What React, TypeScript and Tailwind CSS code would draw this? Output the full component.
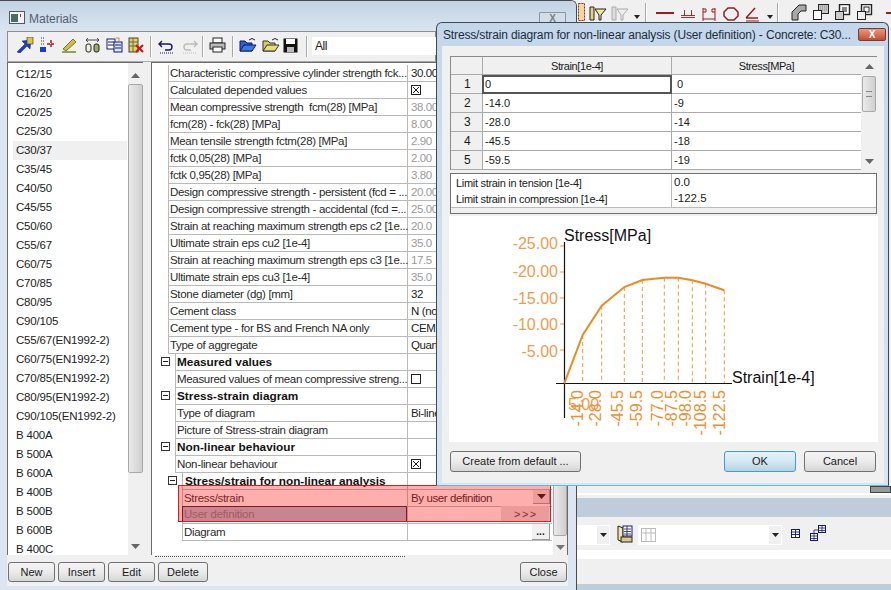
import React from "react";

const F = { fontFamily: '"Liberation Sans", Arial, sans-serif' };

const materials = ["C12/15","C16/20","C20/25","C25/30","C30/37","C35/45","C40/50","C45/55","C50/60","C55/67","C60/75","C70/85","C80/95","C90/105","C55/67(EN1992-2)","C60/75(EN1992-2)","C70/85(EN1992-2)","C80/95(EN1992-2)","C90/105(EN1992-2)","B 400A","B 500A","B 600A","B 400B","B 500B","B 600B","B 400C"];

type Row = { t: string; v?: string; g?: boolean; kind?: "h" | "h2" | "sub" | "sub2"; c?: "x" | "o" };
const rows: Row[] = [
  { t: "Characteristic compressive cylinder strength fck...", v: "30.00" },
  { t: "Calculated depended values", c: "x" },
  { t: "Mean compressive strength  fcm(28) [MPa]", v: "38.00", g: true },
  { t: "fcm(28) - fck(28) [MPa]", v: "8.00", g: true },
  { t: "Mean tensile strength fctm(28) [MPa]", v: "2.90", g: true },
  { t: "fctk 0,05(28) [MPa]", v: "2.00", g: true },
  { t: "fctk 0,95(28) [MPa]", v: "3.80", g: true },
  { t: "Design compressive strength - persistent (fcd = ...", v: "20.00", g: true },
  { t: "Design compressive strength - accidental (fcd =...", v: "25.00", g: true },
  { t: "Strain at reaching maximum strength eps c2 [1e...", v: "20.0", g: true },
  { t: "Ultimate strain eps cu2 [1e-4]", v: "35.0", g: true },
  { t: "Strain at reaching maximum strength eps c3 [1e...", v: "17.5", g: true },
  { t: "Ultimate strain eps cu3 [1e-4]", v: "35.0", g: true },
  { t: "Stone diameter (dg) [mm]", v: "32" },
  { t: "Cement class", v: "N (normal)" },
  { t: "Cement type - for BS and French NA only", v: "CEM I" },
  { t: "Type of aggregate", v: "Quartzite" },
  { t: "Measured values", kind: "h" },
  { t: "Measured values of mean compressive streng...", kind: "sub", c: "o" },
  { t: "Stress-strain diagram", kind: "h" },
  { t: "Type of diagram", kind: "sub", v: "Bi-linear" },
  { t: "Picture of Stress-strain diagram", kind: "sub" },
  { t: "Non-linear behaviour", kind: "h" },
  { t: "Non-linear behaviour", kind: "sub", c: "x" },
  { t: "Stress/strain for non-linear analysis", kind: "h2" },
  { t: "Stress/strain", kind: "sub2", v: "By user definition" },
  { t: "", kind: "sub2" },
  { t: "Diagram", kind: "sub2" },
];

const tableRows = [["1", "0", " 0"], ["2", "-14.0", "-9"], ["3", "-28.0", "-14"], ["4", "-45.5", "-18"], ["5", "-59.5", "-19"]];

const Btn = ({ x, y, w, h = 21, children, blue }: { x: number; y: number; w: number; h?: number; children: React.ReactNode; blue?: boolean }) => (
  <div
    className={`absolute flex items-center justify-center rounded-[3px] border text-[11px] text-[#1a1a1a] bg-gradient-to-b ${blue ? "border-[#3c9fc8] from-[#e4f3fa] via-[#d4e8f2] to-[#b6d2e0]" : "border-[#707070] from-[#f4f4f4] via-[#ebebeb] to-[#d6d6d6]"}`}
    style={{ left: x, top: y, width: w, height: h }}
  >
    {children}
  </div>
);

const Minus = ({ x, y }: { x: number; y: number }) => (
  <div className="absolute flex h-[9px] w-[9px] items-center justify-center border border-[#333] bg-white" style={{ left: x, top: y }}>
    <div className="h-px w-[5px] bg-[#222]" />
  </div>
);

const Arrow = ({ x, y, up, color = "#555" }: { x: number; y: number; up?: boolean; color?: string }) => (
  <svg className="absolute" style={{ left: x, top: y }} width="9" height="5">
    <path d={up ? "M0 5 L4.5 0 L9 5Z" : "M0 0 L9 0 L4.5 5Z"} fill={color} />
  </svg>
);

const Icon = ({ x, y = 38, w = 18, h = 16, children }: { x: number; y?: number; w?: number; h?: number; children: React.ReactNode }) => (
  <svg className="absolute" style={{ left: x, top: y }} width={w} height={h} viewBox={`0 0 ${w} ${h}`}>
    {children}
  </svg>
);

const Sep = ({ x, y = 35, h = 21 }: { x: number; y?: number; h?: number }) => (
  <div className="absolute w-[2px] border-l border-r border-l-[#a8a8a8] border-r-white" style={{ left: x, top: y, height: h }} />
);

const Check = ({ x, y, on }: { x: number; y: number; on: boolean }) => (
  <svg className="absolute" style={{ left: x, top: y }} width="10" height="10">
    <rect x=".5" y=".5" width="9" height="9" fill="#fff" stroke="#222" />
    {on && <path d="M2 2 L8 8 M8 2 L2 8" stroke="#222" strokeWidth="1" />}
  </svg>
);

const curve: [number, number][] = [[564.3,383.3],[582.7,335],[601.7,305.7],[624.3,287],[642.3,280],[664.3,277.7],[678.3,277.7],[692.3,280.3],[705.7,283.7],[724.3,290.3]];
const xLabels: [number, string][] = [[577,"-14.0"],[595,"-28.0"],[617.7,"-45.5"],[636.7,"-59.5"],[657,"-77.0"],[671.7,"-87.5"],[685.7,"-98.0"],[700,"-108.5"],[719.3,"-122.5"]];

export default function App() {
  return (
    <div className="relative h-[590px] w-[891px] overflow-hidden bg-[#f0f0f0] text-[12px] text-[#1a1a1a]" style={F}>
      {/* Right background app */}
      <div className="absolute left-[577px] top-[498px] h-[19px] w-[314px] bg-[#bfccd9]" />
      <div className="absolute left-[577px] top-[550px] h-[9px] w-[314px] bg-white" />
      <div className="absolute left-[577px] top-[584px] h-[6px] w-[314px] bg-[#bfccd9]" />
      <div className="absolute left-[577px] top-[493px] h-[2px] w-[314px] bg-white" />
      <div className="absolute left-[870px] top-[486px] h-[7px] w-[21px] border border-[#444] bg-[#999]" />
      <div className="absolute left-[577px] top-[525px] h-[20px] w-[33px] bg-white" />
      <div className="absolute left-[597px] top-[526px] h-[18px] w-[12px] bg-[#f0f0f0]" />
      <svg className="absolute left-[600px] top-[533px]" width="7" height="4"><path d="M0 0H7L3.500 4Z" fill="#222" /></svg>
      <Icon x={616} y={525} w={18} h={20}>
        <path d="M2 1 L7 3 L7 17 L2 15Z" fill="#f6e7a0" stroke="#222" />
        <rect x="7" y="1" width="9" height="10" fill="#fff" stroke="#1a1a7a" />
        <path d="M8 4h7M8 6.5h7M8 9h7M11 1v10" stroke="#1a1a7a" strokeWidth=".8" />
        <rect x="5" y="12" width="11" height="5" fill="#d9c98b" stroke="#222" />
      </Icon>
      <div className="absolute left-[638px] top-[525px] h-[20px] w-[144px] bg-white" />
      <div className="absolute left-[769px] top-[526px] h-[18px] w-[12px] bg-[#f0f0f0]" />
      <svg className="absolute left-[772px] top-[533px]" width="7" height="4"><path d="M0 0H7L3.500 4Z" fill="#222" /></svg>
      <Icon x={641} y={528} w={15} h={14}>
        <rect x=".5" y=".5" width="14" height="13" fill="#fff" stroke="#bbb" />
        <path d="M5 0v14M10 0v14M0 5h15" stroke="#bbb" />
      </Icon>
      <Icon x={791} y={529} w={10} h={10}>
        <rect x=".5" y=".5" width="8" height="8" fill="#fff" stroke="#15157a" />
        <path d="M1 3h7M1 5.500h7M4.500 1v7" stroke="#15157a" strokeWidth=".9" />
      </Icon>
      <Icon x={810} y={525} w={17} h={17}>
        <rect x="8.500" y=".5" width="7" height="7" fill="#fff" stroke="#15157a" />
        <rect x=".5" y="8.500" width="7" height="7" fill="#fff" stroke="#15157a" />
        <path d="M9 3h6M9 5.500h6M1 11h6M1 13.500h6M4 9v6M12 1v6M4 8V5h4" stroke="#15157a" strokeWidth=".8" fill="none" />
      </Icon>

      {/* Top right toolbar */}
      <Icon x={578} y={3} w={8} h={19}>
        <rect x=".5" y=".5" width="6" height="17" fill="#f0d8a0" stroke="#a02020" strokeDasharray="2 1" />
      </Icon>
      <Icon x={589} y={6} w={18} h={16}>
        <path d="M1 1 L5 1 L5 14 L1 14Z" fill="#e8d080" stroke="#222" />
        <path d="M6 3 L17 3 L12 9 L12 14 L10 14 L10 9Z" fill="#f0e6a0" stroke="#222" />
      </Icon>
      <Icon x={611} y={6} w={18} h={16}>
        <path d="M1 1 L5 1 L5 14 L1 14Z" fill="#ddd" stroke="#aaa" />
        <path d="M6 3 L17 3 L12 9 L12 14 L10 14 L10 9Z" fill="#eee" stroke="#aaa" />
      </Icon>
      <svg className="absolute left-[634px] top-[15px]" width="6" height="4"><path d="M0 0H6L3 4Z" fill="#222" /></svg>
      <Sep x={645} y={3} h={22} />
      <div className="absolute left-[656px] top-[12px] h-[2px] w-[18px] bg-[#9c1c1c]" />
      <Icon x={681} y={8} w={14} h={10}>
        <path d="M0 7.500h14M0 9.500h14M3.500 2v6M10.500 2v6" stroke="#9c1c1c" strokeWidth=".9" fill="none" />
      </Icon>
      <Icon x={702} y={7} w={14} h={15}>
        <path d="M1 1v13M13 1v13M1 12h12M1 2h3v3H1M13 2h-3v3h3" stroke="#9c1c1c" fill="none" />
      </Icon>
      <Icon x={723} y={7} w={16} h={14}>
        <path d="M5 1h6l4 4v4l-4 4H5L1 9V5Z" fill="none" stroke="#9c1c1c" strokeWidth="1.5" />
      </Icon>
      <Icon x={745} y={7} w={15} h={15}>
        <path d="M1 11 L10 1 M1 11 H13" stroke="#9c1c1c" strokeWidth="1.5" fill="none" />
        <path d="M1 14h13" stroke="#9c1c1c" />
      </Icon>
      <svg className="absolute left-[767px] top-[15px]" width="6" height="4"><path d="M0 0H6L3 4Z" fill="#222" /></svg>
      <Sep x={777} y={3} h={22} />
      <Icon x={791} y={4} w={16} h={17}>
        <path d="M1 16 V8 L8 1 H15 V7 H10 L7 10 V16Z" fill="#a8a8a8" stroke="#222" />
      </Icon>
      <Icon x={813} y={4} w={16} h={17}>
        <rect x="5.500" y=".5" width="10" height="9" fill="#c8c8c8" stroke="#222" />
        <path d="M7 2h7M7 4h7M7 6h7" stroke="#888" strokeDasharray="1 1" />
        <rect x=".5" y="6.500" width="8" height="9" fill="#fff" stroke="#222" />
      </Icon>
      <Icon x={835} y={4} w={16} h={17}>
        <rect x="4.500" y=".5" width="10" height="10" fill="#fff" stroke="#222" strokeWidth="1.4" />
        <rect x="7" y="3" width="5" height="5" fill="#888" />
        <rect x=".5" y="7.500" width="8" height="8" fill="#ccc" stroke="#222" />
      </Icon>
      <Icon x={857} y={4} w={16} h={17}>
        <rect x="4.500" y=".5" width="10" height="10" fill="#fff" stroke="#222" strokeWidth="1.4" />
        <rect x="7" y="3" width="5" height="5" fill="#fff" stroke="#222" />
        <rect x=".5" y="7.500" width="8" height="8" fill="#eee" stroke="#222" />
      </Icon>
      <div className="absolute left-[886px] top-[12px] h-[2px] w-[5px] bg-[#9c1c1c]" />

      {/* Materials window */}
      <div className="absolute left-[-1px] top-0 h-[590px] w-[578px] overflow-hidden rounded-tr-[6px] border-l border-r border-t border-[#4a4a4a] bg-[#dbe6f2]">
        <div className="absolute left-0 top-0 h-[30px] w-full bg-gradient-to-b from-[#c3d3e4] to-[#d9e5f1]" />
        <div className="absolute left-[7px] top-[61px] h-[524px] w-[561px] bg-[#f0f0f0]" />
        <svg className="absolute left-[9px] top-[10px]" width="16" height="13">
          <rect x=".5" y=".5" width="15" height="12" fill="#f4f4f4" stroke="#556" />
          <rect x="2" y="3" width="7" height="8" fill="#4b6a6a" />
          <rect x="11" y="3" width="1" height="3" fill="#b03030" />
        </svg>
        <div className="absolute left-[29px] top-[9px] text-[12px] text-[#55606c]">Materials</div>
        <div className="absolute left-[539px] top-[11px] flex h-[13px] w-[27px] items-center justify-center rounded-b-[2px] border border-[#8a97a5] bg-[#d2dde8] text-[10px] font-bold text-[#7a7f86]">X</div>

        {/* toolbar */}
        <div className="absolute left-[7px] top-[30px] h-[31px] w-[429px] border border-[#8e8e8e] border-b-[#aaa] bg-[#f0f0f0]" />
        <Icon x={16} y={36}>
          <path d="M1 15 L9 7 L6 4 L15 3 L14 12 L11 9 L4 16Z" fill="#1a3fd0" stroke="#0a1a70" strokeWidth=".5" />
          <rect x="11" y="0" width="6" height="7" fill="#e7c22c" stroke="#333" strokeWidth=".6" />
        </Icon>
        <Icon x={39} y={36}>
          <path d="M2 1h4M2 4h4M2 7h4" stroke="#333" strokeDasharray="1 1" />
          <rect x="1" y="10" width="6" height="5" fill="#1a3fd0" />
          <path d="M8 7h8M12 3v8" stroke="#b01818" strokeWidth="1.5" strokeDasharray="3 1" />
        </Icon>
        <Icon x={61} y={36}>
          <path d="M2 12 L12 2 L15 5 L5 14Z" fill="#d9be2c" stroke="#444" strokeWidth=".7" />
          <path d="M1 15h14" stroke="#6a8f1a" strokeWidth="1.5" />
        </Icon>
        <Icon x={84} y={36}>
          <path d="M2 3h13M2 3l2-2M2 3l2 2M15 3l-2-2M15 3l-2 2" stroke="#222" fill="none" strokeWidth=".8" />
          <rect x="2" y="7" width="5" height="8" rx="2" fill="#f0f0d8" stroke="#222" />
          <rect x="10" y="7" width="5" height="8" rx="2" fill="#98b060" stroke="#222" />
        </Icon>
        <Icon x={106} y={36}>
          <rect x="1" y="2" width="8" height="10" fill="#fff" stroke="#16167a" />
          <path d="M2 5h6M2 8h6" stroke="#16167a" />
          <rect x="8" y="5" width="8" height="10" fill="#d5e8f5" stroke="#16167a" />
          <path d="M9 8h6M9 11h6" stroke="#16167a" />
          <path d="M10 1 L13 1 L13 4" stroke="#c09020" fill="none" />
        </Icon>
        <Icon x={128} y={36}>
          <rect x="1" y="1" width="9" height="14" fill="#e5cf60" stroke="#444" />
          <path d="M1 5h9M1 9h9M5 1v14" stroke="#444" strokeWidth=".7" />
          <path d="M8 8 L15 15 M15 8 L8 15" stroke="#c81818" strokeWidth="2.200" />
        </Icon>
        <Sep x={150} />
        <Icon x={158} y={37}>
          <path d="M4 3 L1 6 L4 9 M1 6 H11 a3 3 0 0 1 0 6 H7" fill="none" stroke="#14147a" strokeWidth="1.400" />
          <path d="M2 15h13" stroke="#14147a" strokeDasharray="1 1" />
        </Icon>
        <Icon x={181} y={37}>
          <path d="M13 3 L16 6 L13 9 M16 6 H6 a3 3 0 0 0 0 6 H10" fill="none" stroke="#bbb" strokeWidth="1.400" />
          <path d="M2 15h13" stroke="#bbb" strokeDasharray="1 1" />
        </Icon>
        <Sep x={202} />
        <Icon x={209} y={36}>
          <rect x="4" y="1" width="9" height="5" fill="#fff" stroke="#222" />
          <rect x="1" y="6" width="15" height="6" fill="#bbb" stroke="#222" />
          <rect x="4" y="10" width="9" height="5" fill="#fff" stroke="#222" />
        </Icon>
        <Sep x={232} />
        <Icon x={239} y={36}>
          <path d="M1 14 V4 H6 L8 6 H13 V14Z" fill="#2a5fd8" stroke="#111a60" />
          <path d="M1 14 L5 8 H17 L13 14Z" fill="#3a7ae8" stroke="#111a60" />
          <path d="M10 3 Q13 0 16 3" stroke="#222" fill="none" />
        </Icon>
        <Icon x={262} y={36}>
          <path d="M1 14 V4 H6 L8 6 H13 V14Z" fill="#d6ca60" stroke="#333" />
          <path d="M1 14 L5 8 H17 L13 14Z" fill="#e6de78" stroke="#333" />
          <path d="M10 3 Q13 0 16 3" stroke="#222" fill="none" />
        </Icon>
        <Icon x={283} y={37} w={15} h={15}>
          <rect x=".5" y=".5" width="14" height="14" fill="#111" />
          <rect x="3" y="1" width="9" height="5" fill="#fff" />
          <rect x="4" y="9" width="7" height="5" fill="#bbb" />
        </Icon>
        <Sep x={306} />
        <div className="absolute left-[312px] top-[36px] h-[18px] w-[124px] bg-white pl-[3px] text-[12px] leading-[18px] tracking-[-0.5px]">All</div>

        {/* list */}
        <div className="absolute left-[7px] top-[61px] h-[493px] w-[136px] overflow-hidden border-l border-t border-[#6a6a6a] bg-white">
          {materials.map((m, i) => (
            <div key={m} className={`absolute left-[5px] flex h-[19px] w-[114px] items-center pl-[3px] text-[11.5px] tracking-[-0.2px] text-[#222] ${i === 4 ? "bg-[#f0f0f0]" : ""}`} style={{ top: 2 + i * 19 }}>
              {m}
            </div>
          ))}
          <div className="absolute left-[120px] top-0 h-full w-[16px] bg-[#f0f0f0]" />
          <div className="absolute left-[120px] top-[21px] h-[389px] w-[15px] rounded-[2px] border border-[#a8a8a8] bg-gradient-to-r from-[#eaeaea] to-[#cfcfcf]" />
          <Arrow x={123} y={10} up color="#666" />
          <Arrow x={123} y={481} color="#666" />
        </div>

        {/* grid */}
        <div className="absolute left-[151px] top-[61px] h-[493px] w-[417px] overflow-hidden border-l border-t border-r border-[#6a6a6a] bg-white">
          {rows.map((r, i) => {
            const top = 2 + i * 17;
            const left = r.kind === "h" || r.kind === "sub" ? 23 : r.kind === "h2" || r.kind === "sub2" ? 30 : 16;
            const bold = r.kind === "h" || r.kind === "h2";
            const textLeft = r.kind === "h2" ? 31 : left;
            return (
              <div key={i} className="absolute h-[17px] w-[400px]" style={{ top }}>
                <div className="absolute right-0 top-[16px] h-px bg-[#b9b9b9]" style={{ left }} />
                <div className="absolute left-[255px] top-0 h-[17px] w-px bg-[#b9b9b9]" />
                <div className="absolute top-0 h-[17px] w-px bg-[#b9b9b9]" style={{ left }} />
                <div
                  className={`absolute top-0 whitespace-pre leading-[17px] ${bold ? "text-[11.8px] font-bold text-[#111]" : "text-[11.5px] tracking-[-0.32px] text-[#2a2a2a]"}`}
                  style={{ left: textLeft + 2 }}
                >
                  {r.t}
                </div>
                {r.v && (
                  <div className={`absolute left-[259px] top-0 whitespace-pre text-[11.5px] leading-[17px] tracking-[-0.4px] ${r.g ? "text-[#9a9a9a]" : "text-[#222]"}`}>{r.v}</div>
                )}
                {r.c && <Check x={259} y={3} on={r.c === "x"} />}
                {r.kind === "h" && <Minus x={9} y={3} />}
                {r.kind === "h2" && <Minus x={16} y={3} />}
              </div>
            );
          })}
          <div className="absolute left-[380px] top-[461px] flex h-[16px] w-[18px] items-center justify-center border-b border-r border-[#999] bg-[#f0f0f0] text-[10px] font-bold">...</div>
          {/* scrollbar */}
          <div className="absolute left-[401px] top-0 h-full w-[15px] bg-[#f0f0f0]" />
          <div className="absolute left-[401px] top-[405px] h-[68px] w-[14px] rounded-[2px] border border-[#a8a8a8] bg-gradient-to-r from-[#eaeaea] to-[#cfcfcf]" />
          <Arrow x={404} y={482} color="#777" />
        </div>
        <div className="absolute left-[155px] top-[555px] h-px w-[250px] border-t border-dotted border-[#555]" />

        {/* highlighted rows */}
        <div className="absolute left-[182px] top-[505px] h-[16px] w-[225px] border border-[#3a1a1a] bg-[#aabed0]" />
        <div className="absolute left-[184px] top-[505px] text-[11.5px] leading-[17px] tracking-[-0.2px] text-[#777a80]">User definition</div>
        <div className="absolute left-[533px] top-[489px] flex h-[14px] w-[17px] items-center justify-center border-b border-r border-[#999] bg-[#e4e4e4]">
          <svg width="9" height="5"><path d="M0 0H9L4.500 5Z" fill="#111" /></svg>
        </div>
        <div className="absolute left-[501px] top-[505px] h-[16px] w-[48px] bg-[#e2e2e2] pl-[13px] text-[11px] leading-[17px] tracking-[1.5px] text-[#333]">&gt;&gt;&gt;</div>
        <div className="absolute left-[178px] top-[484px] h-[37px] w-[373px] border border-[#cc1f2a] bg-[rgba(255,30,30,0.36)]" />

        {/* bottom buttons */}
        <Btn x={8} y={561} w={47} h={20}>New</Btn>
        <Btn x={58} y={561} w={47} h={20}>Insert</Btn>
        <Btn x={108} y={561} w={47} h={20}>Edit</Btn>
        <Btn x={158} y={561} w={50} h={20}>Delete</Btn>
        <Btn x={520} y={561} w={47} h={20}>Close</Btn>
      </div>

      {/* Dialog */}
      <div className="absolute left-[436px] top-[22px] h-[464px] w-[453px] overflow-hidden rounded-t-[6px] border border-[#3d4a55] border-b-[#59bfe0] bg-gradient-to-b from-[#c4d7ea] to-[#d8e6f3]">
        <div className="absolute left-[6px] top-[4px] w-[412px] whitespace-nowrap text-[12px] leading-[16px] tracking-[-0.15px] text-[#1b2c3c]">Stress/strain diagram for non-linear analysis (User definition) - Concrete: C30...</div>
        <div className="absolute left-[421px] top-[5px] flex h-[13px] w-[28px] items-center justify-center rounded-[2px] border border-[#7f3a2c] bg-gradient-to-b from-[#e59a82] to-[#c8492c] text-[10px] font-bold text-white">X</div>
        <div className="absolute left-[5px] top-[23px] h-[437px] w-[442px] bg-[#f0f0f0]">
          <div className="absolute left-[8px] top-[10px] h-[114px] w-[427px] overflow-hidden border-l border-t border-[#8a8a8a] bg-white text-[11px]">
            <div className="absolute left-0 top-0 h-[18px] w-[410px] border-b border-[#aaa] bg-[#f0f0f0]" />
            <div className="absolute left-0 top-[18px] h-[96px] w-[31px] bg-[#f0f0f0]" />
            <div className="absolute left-[31px] top-0 h-[114px] w-px bg-[#aaa]" />
            <div className="absolute left-[220px] top-0 h-[114px] w-px bg-[#aaa]" />
            <div className="absolute left-[32px] top-0 h-[18px] w-[188px] text-center leading-[18px] tracking-[-0.4px]">Strain[1e-4]</div>
            <div className="absolute left-[221px] top-0 h-[18px] w-[189px] text-center leading-[18px] tracking-[-0.4px]">Stress[MPa]</div>
            <div className="absolute left-[410px] top-0 h-full w-[16px] bg-[#f0f0f0]" />
            {tableRows.map((r, i) => (
              <React.Fragment key={r[0]}>
                <div className="absolute left-0 h-px w-[410px] bg-[#aaa]" style={{ top: 18 + (i + 1) * 19 - 1 }} />
                <div className="absolute left-0 h-[18px] w-[31px] pl-[13px] text-[12px] leading-[18px]" style={{ top: 18 + i * 19 }}>{r[0]}</div>
                <div className="absolute left-[34px] h-[18px] whitespace-pre leading-[18px]" style={{ top: 18 + i * 19 }}>{r[1]}</div>
                <div className="absolute left-[223px] h-[18px] whitespace-pre leading-[18px]" style={{ top: 18 + i * 19 }}>{r[2]}</div>
              </React.Fragment>
            ))}
            <div className="absolute left-[31px] top-[18px] h-[19px] w-[190px] border-2 border-[#555]" />
            <div className="absolute left-[411px] top-[19px] h-[36px] w-[14px] rounded-[2px] border border-[#a8a8a8] bg-gradient-to-r from-[#eaeaea] to-[#cfcfcf]" />
            <Arrow x={414} y={7} up color="#666" />
            <Arrow x={414} y={102} color="#666" />
            <div className="absolute left-[415px] top-[34px] h-[6px] w-[6px] border-b border-t border-[#888]" />
          </div>
          <div className="absolute left-[8px] top-[127px] h-[41px] w-[427px] border border-[#707070] bg-[#f0f0f0] text-[11px] tracking-[-0.3px]">
            <div className="absolute left-0 top-0 h-[33px] w-full bg-white" />
            <div className="absolute left-0 top-[33px] h-px w-full bg-[#bbb]" />
            <div className="absolute left-[5px] top-0 leading-[18px]">Limit strain in tension [1e-4]</div>
            <div className="absolute left-[5px] top-[17px] leading-[16px]">Limit strain in compression [1e-4]</div>
            <div className="absolute left-[220px] top-0 h-[33px] w-px bg-[#bbb]" />
            <div className="absolute left-[223px] top-0 text-[11.5px] leading-[16px] tracking-normal">0.0</div>
            <div className="absolute left-[223px] top-[16px] text-[11.5px] leading-[16px] tracking-normal">-122.5</div>
          </div>
          <svg className="absolute left-[7px] top-[170px]" width="429" height="226" viewBox="449 216 429 226" style={F}>
            <rect x="449" y="216" width="429" height="226" fill="#fff" />
            {curve.slice(1).map(([x, y]) => (
              <line key={x} x1={x} y1={y} x2={x} y2={383} stroke="#ed9740" strokeWidth="1" strokeDasharray="4 3" />
            ))}
            {[248, 274, 300, 326, 352].map((y) => (
              <line key={y} x1="560" x2="564" y1={y - 2} y2={y - 2} stroke="#ed9740" />
            ))}
            <line x1="564.500" y1="242" x2="564.500" y2="418" stroke="#111" strokeWidth="1.2" />
            <line x1="556" y1="383.500" x2="732" y2="383.500" stroke="#111" strokeWidth="1.2" />
            <polyline points={curve.map((p) => p.join(",")).join(" ")} fill="none" stroke="#ee8a20" strokeWidth="2" />
            {[["-25.00", 243], ["-20.00", 271], ["-15.00", 298], ["-10.00", 324], ["-5.00", 351]].map(([t, y]) => (
              <text key={t} x="558" y={Number(y) + 6} textAnchor="end" fontSize="16" fill="#ee9c50">{t}</text>
            ))}
            <text x="568" y="410" fontSize="16" fill="#ee9c50">5.00</text>
            {xLabels.map(([x, t]) => (
              <text key={t} transform={`translate(${x + 5.5},390) rotate(-90)`} textAnchor="end" fontSize="16" fill="#ee9030">{t}</text>
            ))}
            <text x="564" y="241" fontSize="16" fill="#111">Stress[MPa]</text>
            <text x="732" y="383" fontSize="16" fill="#111">Strain[1e-4]</text>
          </svg>
          <Btn x={8} y={405} w={131}>Create from default ...</Btn>
          <Btn x={282} y={405} w={72} blue>OK</Btn>
          <Btn x={362} y={405} w={72}>Cancel</Btn>
        </div>
      </div>
    </div>
  );
}
